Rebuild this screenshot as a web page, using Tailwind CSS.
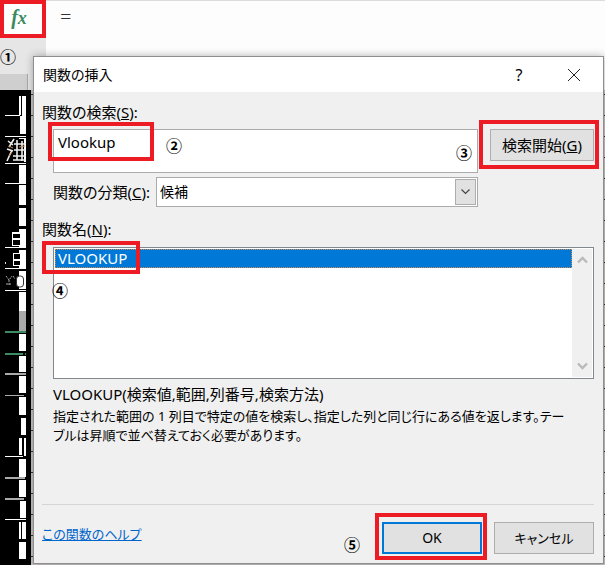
<!DOCTYPE html>
<html lang="ja">
<head>
<meta charset="utf-8">
<meta name="viewport" content="width=device-width, initial-scale=1">
<title>関数の挿入</title>
<script src="https://cdn.jsdelivr.net/npm/@tailwindcss/browser@4"></script>
</head>
<body class="bg-[#e6e6e6] text-black text-[15px] leading-[20px] font-['Noto_Sans','Noto_Sans_CJK_JP',sans-serif] [font-feature-settings:'palt']">
<div class="relative isolate min-h-screen flex flex-col overflow-hidden">

  <!-- Spreadsheet behind the dialog -->
  <div class="absolute inset-0 -z-10 flex flex-col">
    <header class="flex h-[90px] shrink-0">
      <div class="w-[46px] shrink-0 flex flex-col justify-between">
        <button type="button" aria-label="関数の挿入" class="h-[38px] w-[46px] border-[4px] border-[#ed1c24] bg-[#fdfdfd] text-[#3a8a5f] font-bold italic text-[20px] leading-[22px] pb-1 pr-2 font-['Liberation_Serif',serif]">f<span class="text-[18px]">x</span></button>
        <span class="text-[16px] font-bold font-['Noto_Sans_CJK_JP',sans-serif]">①</span>
        <div class="h-[16px] w-[28px] bg-[#cfcfcf] border-r border-[#aaa]"></div>
      </div>
      <input type="text" aria-label="数式バー" value="=" class="grow min-w-0 h-full bg-[#fdfdfd] border-t border-[#dcdcdc] pl-[14px] pb-[58px] text-[20px] font-light text-[#333]">
    </header>
    <div class="grow flex bg-[#c9c5c4]">
      <svg class="w-[31px] h-[475px] shrink-0 bg-black" viewBox="0 90 31 475" shape-rendering="crispEdges" aria-hidden="true">
        <g fill="#fff">
          <path d="M19 96h2v19h-2zM22 96h4v38h-6v-18h2zM19 138h7v24h-7zM19 165h7v18h-7zM19 185h7v20h-7zM19 208h7v18h-7zM19 229h7v18h-7zM19 250h7v18h-7zM19 271h7v18h-7zM19 292h7v19h-7z"/>
          <path d="M19 334h7v17h-7zM19 356h7v16h-7zM19 376h7v17h-7zM19 397h7v18h-7zM21 418h5v17h-5zM19 438h3v17h-3zM24 438h2v18h-2zM19 459h7v18h-7zM19 480h7v17h-7zM20 501h6v17h-6zM19 522h2v17h-2zM22 522h4v17h-4zM19 542h7v17h-7z"/>
          <path d="M5 115h15v1h-15zM5 136h21v1h-21zM5 163h21v1h-21zM5 183h21v1h-21zM5 247h21v1h-21zM5 268h21v1h-21zM5 290h21v1h-21zM5 456h18v1h-18zM5 519h21v1h-21z"/>
        </g>
        <g fill="#aaa"><path d="M19 311h7v20h-7zM5 373h21v2h-21zM5 395h19v1h-19zM5 477h20v2h-20zM5 498h19v2h-19z"/></g>
        <path fill="#3d8b60" d="M5 331h21v2h-21zM5 353h18v2h-18zM25 353h1v2h-1z"/>
        <path fill="#fff" d="M12 232h10v14h-10zM13 253h9v13h-9z"/>
        <path fill="#000" d="M13 234h7v4h-7zM13 240h7v5h-7zM14 254h6v5h-6zM14 261h6v4h-6z"/>
        <path fill="#ddd" d="M5 262h1v2h-1z"/>
        <g fill="none" stroke="#aaa" shape-rendering="auto"><path d="M6 276l3 4 3-4M9 280v6M6 284h6M13 276l2 3" stroke-dasharray="2 1"/><rect x="16.500" y="276" width="7" height="11" rx="3" stroke="#333" fill="#fff"/></g>
        <path fill="#000" d="M14 139h10v23h-10z"/>
        <g fill="none" stroke="#eee" stroke-width="1.600" shape-rendering="auto"><path d="M8 141l5 4M14 139l-5 8M7 149l6 2M12 150l-5 11M14 144h12M14 150h12M13 156h13M17 140v20M22 141v20M13 160h13"/></g>
        <g fill="none" stroke="#d19155" shape-rendering="auto"><path d="M9 146l4 2M9 156l3-4M19 147l6-1"/></g>
      </svg>
      <div class="grow bg-[repeating-linear-gradient(to_bottom,transparent_0_4px,#333_4px_5px,transparent_5px_21px)]"></div>
    </div>
  </div>

  <main role="dialog" aria-labelledby="dialog-title" class="mt-[56px] ml-[33px] mr-[1px] mb-[1px] grow flex flex-col border border-[#8e8e8e] bg-[#f0f0f0] shadow-[0_0_8px_rgba(0,0,0,0.3)]">
    <div class="h-[35px] flex items-center bg-white pl-[9px] pr-[20px]">
      <h1 id="dialog-title" class="grow text-[14px]">関数の挿入</h1>
      <button type="button" aria-label="ヘルプ" class="w-[20px] mr-[38px] text-[16px]">?</button>
      <button type="button" aria-label="閉じる" class="w-[16px]">
        <svg class="size-[14px]" viewBox="0 0 14 14" fill="none" stroke="#222" stroke-width="1"><path d="M1 1l12 12M13 1L1 13"/></svg>
      </button>
    </div>

    <form class="grow flex flex-col pl-[8px] pr-[9px] pt-[10px]">
      <label for="search">関数の検索(<u>S</u>):</label>
      <div class="flex items-start gap-[12px] pl-[11px] mt-[7px]">
        <div class="relative grow flex">
          <textarea id="search" class="grow min-w-0 h-[44px] resize-none border border-[#ababab] bg-white px-[4px] py-[2px]">Vlookup</textarea>
          <span class="absolute -left-[5px] -top-[7px] w-[106px] h-[39px] border-[4px] border-[#ed1c24]"></span>
          <span class="absolute left-[113px] top-[6px] text-[16px] font-bold font-['Noto_Sans_CJK_JP',sans-serif]">②</span>
          <span class="absolute right-[6px] top-[13px] text-[16px] font-bold font-['Noto_Sans_CJK_JP',sans-serif]">③</span>
        </div>
        <div class="relative w-[104px] shrink-0">
          <button type="button" class="w-full h-[32px] border border-[#adadad] bg-[#e1e1e1]">検索開始(<u>G</u>)</button>
          <span class="absolute -left-[11px] -right-[5px] -top-[9px] h-[49px] border-[4px] border-[#ed1c24]"></span>
        </div>
      </div>

      <div class="flex items-center pl-[11px] pr-[116px] mt-[4px]">
        <label for="category" class="w-[103px] shrink-0 whitespace-nowrap">関数の分類(<u>C</u>):</label>
        <div class="relative grow">
          <select id="category" class="appearance-none block w-full h-[30px] border border-[#ababab] bg-white px-[3px] text-[14px]"><option>候補</option></select>
          <span class="pointer-events-none absolute right-[2px] inset-y-[2px] w-[21px] border border-[#adadad] bg-[#e1e1e1] flex items-center justify-center">
            <svg class="w-[9px] h-[6px]" viewBox="0 0 9 6" fill="none" stroke="#444" stroke-width="1.200"><path d="M.500.500l4 4 4-4"/></svg>
          </span>
        </div>
      </div>

      <div id="names-label" class="mt-[12px]">関数名(<u>N</u>):</div>
      <div class="relative ml-[11px] mt-[8px] h-[132px] flex border border-[#828790] bg-white p-px">
        <ul role="listbox" aria-labelledby="names-label" tabindex="0" class="grow">
          <li role="option" aria-selected="true" class="h-[19px] px-[2px] leading-[17px] bg-[#0078d7] text-white border border-dotted border-[#d08a50]">VLOOKUP</li>
        </ul>
        <div class="w-[20px] bg-[#f0f0f0] flex flex-col justify-between items-center py-[7px]">
          <button type="button" aria-label="上へ" class="block"><svg class="w-[11px] h-[8px]" viewBox="0 0 11 8" fill="none" stroke="#bababa" stroke-width="2.400"><path d="M1 6.500l4.500-4.500L10 6.500"/></svg></button>
          <button type="button" aria-label="下へ" class="block"><svg class="w-[11px] h-[8px]" viewBox="0 0 11 8" fill="none" stroke="#bababa" stroke-width="2.400"><path d="M1 1.500L5.500 6 10 1.500"/></svg></button>
        </div>
        <span class="absolute -left-[12px] -top-[7px] w-[98px] h-[33px] border-[4px] border-[#ed1c24]"></span>
        <span class="absolute -left-[2px] top-[32px] text-[16px] font-bold font-['Noto_Sans_CJK_JP',sans-serif]">④</span>
      </div>

      <p class="ml-[11px] mt-[5px]">VLOOKUP(検索値,範囲,列番号,検索方法)</p>
      <p class="ml-[11px] mt-[3px] text-[13px] leading-[19px] whitespace-nowrap">指定された範囲の 1 列目で特定の値を検索し、指定した列と同じ行にある値を返します。テー<br>ブルは昇順で並べ替えておく必要があります。</p>

      <div class="mt-auto border-t border-[#d5d5d5] flex items-start pt-[17px] pb-[9px]">
        <a href="#" class="mt-[2px] text-[13px] text-[#0066cc] underline">この関数のヘルプ</a>
        <span class="ml-auto mt-[12px] mr-[22px] text-[16px] font-bold font-['Noto_Sans_CJK_JP',sans-serif]">⑤</span>
        <div class="relative w-[100px] mr-[12px]">
          <button type="submit" class="w-full h-[32px] border-2 border-[#0078d7] bg-[#e1e1e1] text-[14px]">OK</button>
          <span class="absolute -left-[7px] -right-[5px] -top-[9px] h-[47px] border-[4px] border-[#ed1c24]"></span>
        </div>
        <button type="button" class="w-[100px] h-[32px] border border-[#adadad] bg-[#e1e1e1] text-[13px]">キャンセル</button>
      </div>
    </form>
  </main>
</div>
</body>
</html>
